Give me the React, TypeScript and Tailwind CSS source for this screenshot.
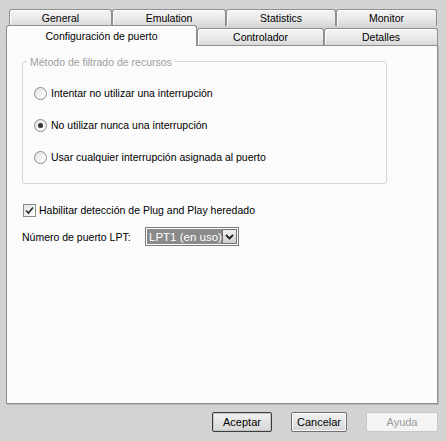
import React from 'react'

const font = { fontFamily: '"Liberation Sans", Arial, sans-serif' }

type TabProps = { label: string; w: string; active?: boolean }

const Tab = ({ label, w, active }: TabProps) => {
    if (active) {
        return (
            <div className={`${w} h-[21px] -mb-px relative z-10 flex items-start justify-center pt-[2px] bg-[#fcfcfc] border border-b-0 border-[#8e8f8f] rounded-t-[3px] text-black`}>
                {label}
            </div>
        )
    }
    return (
        <div className={`${w} h-[17px] flex items-center justify-center bg-gradient-to-b from-[#f4f4f4] via-[#ebebeb] to-[#d8d8d8] border border-[#8e8f8f] border-b-0 rounded-t-[3px] text-black shadow-[inset_1px_1px_0_#ffffff]`}>
            {label}
        </div>
    )
}

const Radio = ({ checked, label }: { checked?: boolean; label: string }) => (
    <div className="flex items-center gap-[4px] h-[16px]">
        <div className="w-[13px] h-[13px] rounded-full border border-[#8a8a8a] bg-gradient-to-br from-[#e2e2e2] to-[#ffffff] flex items-center justify-center">
            {checked && <div className="w-[5px] h-[5px] rounded-full bg-[#333333]" />}
        </div>
        <span>{label}</span>
    </div>
)

const Button = ({ label, w, primary, disabled }: { label: string; w: string; primary?: boolean; disabled?: boolean }) => (
    <div
        className={`${w} h-[20px] flex items-center justify-center rounded-[2px] border text-[11px] ${
            disabled
                ? 'border-[#c8c8c8] bg-[#f4f4f4] text-[#9a9a9a]'
                : primary
                ? 'border-[#3c3c3c] bg-gradient-to-b from-[#f2f2f2] to-[#d6d6d6] text-black shadow-[inset_0_0_0_1px_#c4c4c4]'
                : 'border-[#707070] bg-gradient-to-b from-[#f2f2f2] to-[#d6d6d6] text-black shadow-[inset_0_0_0_1px_#fafafa]'
        }`}
    >
        {label}
    </div>
)

export default function App() {
    return (
        <div className="w-[446px] h-[441px] bg-[#d3d3d3] flex flex-col text-[10.5px] leading-[16px] overflow-hidden" style={font}>
            {/* tab rows */}
            <div className="pt-[9px]">
                <div className="flex ml-[9px]">
                    <Tab label="General" w="w-[103px]" />
                    <Tab label="Emulation" w="w-[114px]" />
                    <Tab label="Statistics" w="w-[110px]" />
                    <Tab label="Monitor" w="w-[101px]" />
                </div>
                <div className="flex ml-[6px] items-end -mt-px">
                    <Tab label="Configuración de puerto" w="w-[191px]" active />
                    <Tab label="Controlador" w="w-[127px]" />
                    <Tab label="Detalles" w="w-[114px]" />
                </div>
            </div>

            {/* panel */}
            <div className="ml-[6px] w-[432px] h-[359px] bg-[#fbfbfb] border border-[#8e8f8f] shadow-[1px_1px_0_#b5b5b5] pt-[15px] pl-[15px] text-black">
                <div className="w-[365px] h-[123px] border border-[#d5d5d5] rounded-[3px] relative pt-[23px] pl-[11px] flex flex-col gap-[16px]">
                    <span className="absolute -top-[8px] left-[4px] bg-[#fbfbfb] px-[3px] text-[#a0a0a0]">
                        Método de filtrado de recursos
                    </span>
                    <Radio label="Intentar no utilizar una interrupción" />
                    <Radio checked label="No utilizar nunca una interrupción" />
                    <Radio label="Usar cualquier interrupción asignada al puerto" />
                </div>

                <div className="flex items-center gap-[3px] mt-[18px] ml-[1px] h-[16px]">
                    <div className="w-[13px] h-[13px] border border-[#8a8a8a] bg-gradient-to-br from-[#e2e2e2] to-[#ffffff] flex items-center justify-center">
                        <svg width="9" height="9" viewBox="0 0 9 9">
                            <path d="M1 4.5 L3.5 7 L8 1.5" stroke="#2a2a2a" strokeWidth="1.6" fill="none" />
                        </svg>
                    </div>
                    <span>Habilitar detección de Plug and Play heredado</span>
                </div>

                <div className="flex items-center mt-[9px]">
                    <span className="w-[123px]">Número de puerto LPT:</span>
                    <div className="w-[94px] h-[19px] border border-[#7a7a7a] bg-white flex items-center p-[1px]">
                        <div className="flex-1 h-full bg-[#8a8a8a] text-white flex items-center pl-[2px] text-[11.5px] whitespace-nowrap overflow-hidden">
                            LPT1 (en uso)
                        </div>
                        <div className="w-[15px] h-full border border-[#6f6f6f] bg-gradient-to-b from-[#f0f0f0] to-[#cfcfcf] flex items-center justify-center">
                            <svg width="9" height="6" viewBox="0 0 9 6">
                                <path d="M1 1 L4.5 4.5 L8 1" stroke="#222" strokeWidth="1.8" fill="none" />
                            </svg>
                        </div>
                    </div>
                </div>
            </div>

            {/* buttons */}
            <div className="flex justify-end gap-[19px] pr-[8px] mt-[8px]">
                <Button label="Aceptar" w="w-[60px]" primary />
                <Button label="Cancelar" w="w-[56px]" />
                <Button label="Ayuda" w="w-[72px]" disabled />
            </div>
        </div>
    )
}
